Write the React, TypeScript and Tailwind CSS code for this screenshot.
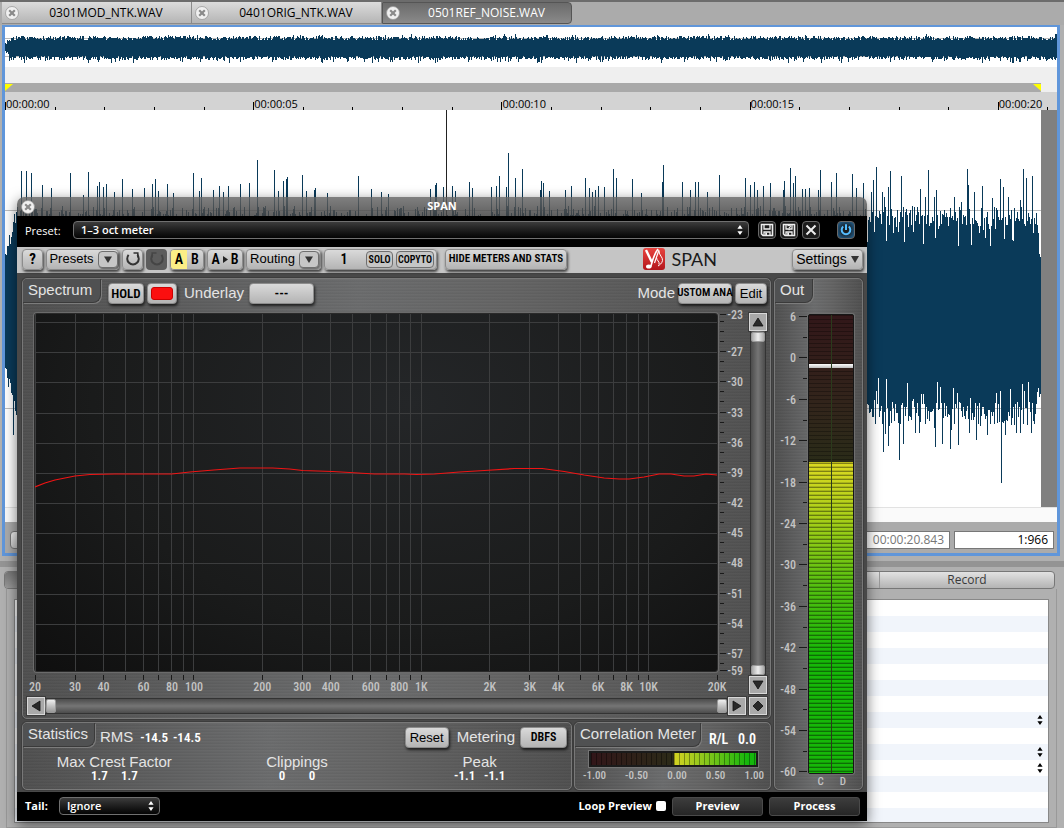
import type { ReactNode } from 'react'
import { clsx } from 'clsx'

const UI_FONT = "font-['Open_Sans','Noto_Sans',sans-serif]"
const LABEL_FONT = "font-['Liberation_Sans',sans-serif]"
const NARROW_FONT = "font-['Roboto_Condensed','Liberation_Sans_Narrow','Open_Sans_Condensed',sans-serif]"

const BRUSHED =
  'bg-[repeating-linear-gradient(to_bottom,rgba(255,255,255,0.02)_0px,rgba(255,255,255,0.02)_1px,rgba(0,0,0,0.03)_2px,rgba(0,0,0,0.03)_3px),linear-gradient(to_right,#505050,#6b6c6d_45%,#646464_65%,#505050)]'
const PLATE =
  'rounded-[4px] border border-[#8c8c8c] bg-linear-to-b from-[#dadada] to-[#b4b4b4] text-black shadow-[1px_2px_3px_rgba(0,0,0,0.7)]'

/* ---------- waveform data ---------- */

function makeRandom(seed: number) {
  let s = seed
  return () => {
    s = (s * 1664525 + 1013904223) % 4294967296
    return s / 4294967296
  }
}

// upward peaks, [x, y] in track pixels
const TOP_PEAKS: [number, number][] = [
  [21, 61], [26, 61], [31, 63], [42, 75], [51, 78], [70, 63], [83, 85], [88, 62], [97, 76], [99, 72],
  [103, 77], [106, 74], [114, 82], [122, 69], [132, 79], [144, 78], [152, 74], [155, 69], [158, 81], [167, 74],
  [173, 83], [193, 63], [199, 81], [201, 68], [213, 80], [219, 76], [223, 82], [228, 76], [240, 74], [249, 73],
  [257, 50], [274, 60], [278, 81], [283, 71], [286, 69], [287, 67], [302, 65], [306, 81], [314, 80], [315, 78],
  [327, 83], [358, 66], [371, 79], [381, 82], [388, 84], [430, 79], [435, 75], [436, 73], [443, 77], [452, 76],
  [455, 81], [469, 72], [472, 78], [491, 77], [496, 76], [499, 66], [506, 77], [508, 43], [515, 68], [522, 59],
  [540, 80], [541, 71], [543, 73], [549, 81], [565, 80], [571, 76], [585, 68], [589, 78], [592, 82], [595, 80],
  [598, 76], [604, 77], [613, 59], [616, 68], [632, 69], [641, 83], [662, 72], [663, 55], [682, 72], [690, 80],
  [695, 72], [698, 72], [707, 82], [719, 65], [745, 68], [750, 75], [754, 72], [757, 80], [763, 76], [770, 73],
  [783, 80], [784, 71], [790, 58], [793, 73], [795, 66], [802, 79], [805, 79], [809, 78], [818, 80], [820, 60],
  [831, 72], [836, 63], [852, 64], [856, 78], [863, 73], [871, 82], [873, 70], [876, 57], [882, 82], [884, 87],
  [888, 77], [890, 61], [901, 66], [920, 79], [925, 87], [928, 60], [934, 87], [936, 80], [954, 87], [961, 92],
  [967, 59], [968, 75], [974, 82], [982, 76], [992, 88], [1000, 69], [1003, 77], [1008, 87], [1020, 90],
  [1023, 59], [1026, 68], [1032, 66],
]

const BOTTOM_PEAKS: [number, number][] = [
  [13, 325], [883, 342], [885, 324], [888, 336], [899, 350], [903, 334], [915, 323], [919, 323], [935, 337],
  [942, 334], [950, 339], [958, 335], [969, 323], [976, 330], [987, 325], [1001, 373], [1005, 325], [1016, 323],
  [1020, 323], [1031, 323],
]

function trackPath() {
  const rnd = makeRandom(11)
  const top = new Map(TOP_PEAKS)
  const bottom = new Map(BOTTOM_PEAKS)
  let d = ''
  for (let x = 5; x < 1041; x++) {
    let a = 96 + rnd() * 20 + (rnd() < 0.2 ? rnd() * 26 : 0)
    let b = 292 + rnd() * 24 - (rnd() < 0.22 ? rnd() * 30 : 0) + (rnd() < 0.1 ? 6 : 0)
    if (x < 16) {
      a = 142 - (x - 5) * 4.5 + rnd() * 20
      b = 245 + (x - 5) * 5 + rnd() * 18
    }
    if (x > 1036) {
      a += (x - 1036) * 11
      b -= (x - 1036) * 9
    }
    a = top.get(x) ?? a
    b = bottom.get(x) ?? b
    d += `M${x - 5} ${Math.round(a)}h1V${Math.round(b)}h-1z`
  }
  return d
}

function overviewPath() {
  const rnd = makeRandom(5)
  let d = ''
  for (let x = 0; x < 1052; x++) {
    const ramp = Math.max(0, 6 - x)
    const a = 9 + rnd() * 4 - (rnd() < 0.08 ? 2 : 0) + ramp
    const b = 29 + rnd() * 4 + (rnd() < 0.08 ? 3 : 0) - ramp
    d += `M${x} ${Math.round(a)}h1V${Math.round(b)}h-1z`
  }
  return d
}

const TRACK = trackPath()
const OVERVIEW = overviewPath()

/* ---------- small parts ---------- */

function CloseDot({ label, className }: { label: string; className?: string }) {
  return (
    <button type="button" aria-label={label} className={clsx('shrink-0', className)}>
      <svg width="14" height="14" viewBox="0 0 14 14" className="block">
        <circle cx="7" cy="7" r="6.5" fill="#f0f0f0" stroke="#9a9a9a" strokeWidth="0.8" />
        <path d="M4.2 4.2l5.6 5.6M9.8 4.2l-5.6 5.6" stroke="#8a8a8a" strokeWidth="2.2" />
      </svg>
    </button>
  )
}

function UpDown({ className }: { className?: string }) {
  return (
    <svg width="6" height="10" viewBox="0 0 6 10" className={className} fill="currentColor">
      <path d="M3 0l2.6 3.8H.4zM3 10L.4 6.2h5.2z" />
    </svg>
  )
}

function Plate({ children, className, label }: { children: ReactNode; className?: string; label?: string }) {
  return (
    <button
      type="button"
      aria-label={label}
      className={clsx('flex h-[21px] shrink-0 items-center justify-center whitespace-nowrap', PLATE, className)}
    >
      {children}
    </button>
  )
}

function PanelTab({ children, className }: { children: ReactNode; className?: string }) {
  return (
    <h2
      className={clsx(
        'h-6 shrink-0 rounded-br-[8px] border-r border-b border-[#3a3a3a] bg-[#505152] text-[15px] leading-[22px] whitespace-nowrap text-[#e4e4e4] shadow-[1px_1px_0_#7c7c7c]',
        className,
      )}
    >
      {children}
    </h2>
  )
}

function Panel({ children, className }: { children: ReactNode; className?: string }) {
  return (
    <section
      className={clsx(
        'overflow-hidden rounded-[5px] border border-[#787878] shadow-[0_0_0_1px_#3d3d3d]',
        BRUSHED,
        className,
      )}
    >
      {children}
    </section>
  )
}

function ArrowKey({ path, label }: { path: string; label: string }) {
  return (
    <button
      type="button"
      aria-label={label}
      className="flex size-[18px] shrink-0 items-center justify-center border border-[#d8d8d8] bg-[#a9a9a9] shadow-[0_0_0_1px_#3c3c3c]"
    >
      <svg width="14" height="14" viewBox="0 0 14 14" fill="#2a2a2a" stroke="#111" strokeWidth="0.8">
        <path d={path} />
      </svg>
    </button>
  )
}

/* ---------- editor behind the plug-in ---------- */

const FILES = ['0301MOD_NTK.WAV', '0401ORIG_NTK.WAV', '0501REF_NOISE.WAV']

function FileTabs() {
  return (
    <nav className="flex h-[25px] border-t-2 border-[#6c6c6c] bg-[#ababab] pl-[2px]">
      {FILES.map((name, i) => (
        <div
          key={name}
          className={clsx(
            'flex h-[22px] w-[190px] items-center pl-[3px] text-[12px]',
            i === 2
              ? 'rounded-r-[4px] border border-[#555] bg-linear-to-b from-[#6b6b6b] to-[#8a8a8a] text-white'
              : 'border-r border-b border-[#8a8a8a] bg-linear-to-b from-[#dcdcdc] to-[#b5b5b5] text-black',
          )}
        >
          <CloseDot label={`Close ${name}`} />
          <a href="#" className="flex-1 pl-[2px] text-center">
            {name}
          </a>
        </div>
      ))}
    </nav>
  )
}

const SECONDS = Array.from({ length: 22 }, (_, i) => i)

function Ruler() {
  return (
    <div className="flex h-[18px] overflow-hidden bg-[#d3d3d3]">
      {SECONDS.map((s) => {
        const major = s % 5 === 0
        return (
          <div key={s} className="flex w-[4.72%] shrink-0 items-end">
            <span className={clsx('w-px shrink-0 bg-black', major ? 'h-2' : 'h-[3px]')} />
            {major && (
              <span className="w-0 text-[11px] leading-[12px] whitespace-nowrap text-black">
                00:00:{String(s).padStart(2, '0')}
              </span>
            )}
          </div>
        )
      })}
    </div>
  )
}

function Editor() {
  return (
    <div className="mr-[4px] ml-[2px] border-[3px] border-t-2 border-[#6096da] bg-white">
      <svg viewBox="0 0 1052 40" preserveAspectRatio="none" className="block h-10 w-full">
        <path d="M0 11.5h1052M0 29.5h1052" stroke="#b9b9b9" />
        <path d={OVERVIEW} fill="#0a3a59" shapeRendering="crispEdges" />
      </svg>
      <div className="h-4 bg-[#efefef]" />
      <div className="flex h-[9px] bg-[#efefef] pr-4">
        <div className="flex flex-1 justify-between bg-[#a9a9a9] pt-px">
          <svg width="8" height="7" fill="#ffff00">
            <path d="M0 0h8L0 7z" />
          </svg>
          <svg width="8" height="7" fill="#ffff00">
            <path d="M0 0h8v7z" />
          </svg>
        </div>
      </div>
      <Ruler />
      <div className="flex h-[397px]">
        <svg viewBox="0 0 1036 397" preserveAspectRatio="none" className="block h-full min-w-0 flex-1">
          <path d="M0 100.5h1036M0 298.5h1036" stroke="#bdbdbd" />
          <path d={TRACK} fill="#0a3a59" shapeRendering="crispEdges" />
          <path d="M441 0h1v200h-1z" fill="#222" shapeRendering="crispEdges" />
        </svg>
        <div className="w-4 bg-[#808080]" />
      </div>
      <div className="h-[15px] border-t border-[#e2e2e2] bg-[#fafafa]" />
      <div className="flex h-[31px] items-center gap-1 bg-[#ababab] pt-1 pr-[3px] pl-[5px] text-[12px]">
        <button
          type="button"
          aria-label="Zoom"
          className="mr-auto h-[18px] w-8 rounded-[4px] border border-[#777] bg-linear-to-b from-[#f2f2f2] to-[#c8c8c8]"
        />
        <input
          aria-label="Length"
          defaultValue="00:00:20.843"
          className="h-[18px] w-[100px] border border-[#777] bg-white pr-[5px] text-right text-[#777]"
        />
        <input
          aria-label="Zoom ratio"
          defaultValue="1:966"
          className="h-[18px] w-[100px] border border-[#777] bg-white pr-[5px] text-right text-black"
        />
      </div>
    </div>
  )
}

const ROWS = Array.from({ length: 14 }, (_, i) => i)
const STEPPER_ROWS = [7, 9, 10]

function RecordPane() {
  return (
    <div className="mt-1 flex-1 px-[4px]">
      <div className="mr-[5px] flex h-[18px] overflow-hidden rounded-[4px] border border-[#777] bg-linear-to-b from-[#e2e2e2] to-[#b4b4b4] text-[12px] text-[#3a3a3a]">
        <span className="flex-1 bg-linear-to-b from-[#777] to-[#999]" />
        <span className="flex-[4]" />
        <button type="button" className="flex w-[175px] items-center justify-center border-l border-[#999]">
          Record
        </button>
      </div>
      <div className="mr-[3px] ml-[2px] h-[239px] border-x border-b border-[#999] pt-[10px] pr-[7px] pl-[7px]">
        <div className="h-[224px] overflow-hidden border border-[#888] bg-white">
          <table className="w-full border-collapse">
            <tbody>
              {ROWS.map((r) => (
                <tr key={r} className={clsx('h-4', r % 2 === 1 ? 'bg-[#f1f5fb]' : 'bg-white')}>
                  <td className="h-4 p-0 leading-none">
                    {STEPPER_ROWS.includes(r) && (
                      <button type="button" aria-label="Step value" className="ml-auto flex h-4 w-[11px] items-center text-black">
                        <UpDown className="h-3 w-[6px]" />
                      </button>
                    )}
                  </td>
                </tr>
              ))}
            </tbody>
          </table>
        </div>
      </div>
    </div>
  )
}

/* ---------- plug-in header ---------- */

function DarkSelect({ id, value, className }: { id: string; value: string; className?: string }) {
  return (
    <div className={clsx('relative', className)}>
      <select
        id={id}
        className="block h-[18px] w-full appearance-none rounded-[4px] border border-[#707070] bg-linear-to-b from-[#3c3c3c] to-[#050505] pl-[7px] text-[11px] leading-[14px] font-semibold text-white"
      >
        <option>{value}</option>
      </select>
      <UpDown className="pointer-events-none absolute top-1 right-[6px] text-white" />
    </div>
  )
}

function HostButton({ label, children, className }: { label: string; children: ReactNode; className?: string }) {
  return (
    <button
      type="button"
      aria-label={label}
      className={clsx(
        'flex size-[18px] shrink-0 items-center justify-center rounded-[4px] border border-[#6a6a6a] bg-[#1c1c1c]',
        className,
      )}
    >
      {children}
    </button>
  )
}

function Floppy({ marked }: { marked?: boolean }) {
  return (
    <svg width="14" height="14" viewBox="0 0 14 14" fill="none" stroke="#eee" strokeWidth="1.6">
      <path d="M1.5 1.5h11v11H3L1.5 11z" />
      <path d="M4 1.5V6h6V1.5M4 12.5V9h6v3.5" strokeWidth="1.3" />
      <path d="M5.2 9.4H7v3H5.2z" fill="#eee" stroke="none" />
      {marked && <path d="M5.8 3.2c0-1.4 2.6-1.4 2.6.1 0 1-1.3.8-1.3 2M7.1 6v1.2" strokeWidth="1.2" />}
    </svg>
  )
}

function PresetBar() {
  return (
    <div className="flex h-[31px] items-center bg-black pr-3 pb-1 pl-2">
      <label htmlFor="preset" className="w-12 pt-1 text-[11px] font-medium text-white">
        Preset:
      </label>
      <DarkSelect id="preset" value="1–3 oct meter" className="flex-1" />
      <div className="ml-[9px] flex gap-1">
        <HostButton label="Save preset">
          <Floppy />
        </HostButton>
        <HostButton label="Save preset as">
          <Floppy marked />
        </HostButton>
        <HostButton label="Delete preset">
          <svg width="12" height="12" viewBox="0 0 12 12" stroke="#eee" strokeWidth="2">
            <path d="M1.5 1.5l9 9M10.5 1.5l-9 9" />
          </svg>
        </HostButton>
      </div>
      <HostButton label="Bypass" className="ml-[17px] shadow-[inset_0_0_6px_#1f7fc8]">
        <svg width="12" height="12" viewBox="0 0 12 12" fill="none" stroke="#55bdff" strokeWidth="2">
          <path d="M3.2 2.6a4.3 4.3 0 1 0 5.6 0M6 .3V6" />
        </svg>
      </HostButton>
    </div>
  )
}

function DropKey() {
  return (
    <span className="flex h-[17px] w-5 items-center justify-center rounded-[4px] border border-[#6f6f6f] bg-[#c6c6c6] shadow-[1px_1px_1px_rgba(0,0,0,0.4)]">
      <svg width="8" height="7" fill="#333">
        <path d="M0 .5h8L4 7z" />
      </svg>
    </span>
  )
}

function Toolbar() {
  return (
    <div className="flex h-[26px] items-center gap-[3px] bg-[#c5c5c5] pr-1 pb-[2px] pl-[5px]">
      <Plate className={clsx('w-[21px] text-[15px] font-bold', NARROW_FONT)}>?</Plate>
      <Plate className="w-[73px] gap-1 pl-[2px] text-[13px]">
        Presets
        <DropKey />
      </Plate>
      <Plate label="Undo" className="w-[21px]">
        <svg width="16" height="16" viewBox="0 0 16 16" fill="none" stroke="#333" strokeWidth="2">
          <path d="M3.6 3.8A5.8 5.8 0 1 0 12.4 3.8" />
          <path d="M8.5 2h5M12.8 1.5v5" strokeWidth="1.6" />
        </svg>
      </Plate>
      <button
        type="button"
        aria-label="Redo"
        className="flex h-[21px] w-[21px] shrink-0 items-center justify-center rounded-[4px] bg-[#5c5c5c]"
      >
        <svg width="16" height="16" viewBox="0 0 16 16" fill="none" stroke="#454545" strokeWidth="2">
          <path d="M12.4 3.8A5.8 5.8 0 1 1 3.6 3.8" />
          <path d="M7.5 2h-5M3.2 1.5v5" strokeWidth="1.6" />
        </svg>
      </button>
      <div className={clsx('flex h-[21px] w-[34px] shrink-0 overflow-hidden text-[14px] font-semibold', PLATE, NARROW_FONT)}>
        <button type="button" className="flex-1 bg-[#fbee86] leading-[19px]">
          A
        </button>
        <button type="button" className="flex-1 leading-[19px]">
          B
        </button>
      </div>
      <Plate label="Copy A to B" className={clsx('w-[36px] gap-[3px] text-[14px] font-semibold', NARROW_FONT)}>
        A
        <svg width="5" height="7" fill="#222">
          <path d="M0 0v7l5-3.5z" />
        </svg>
        B
      </Plate>
      <Plate className="w-[75px] gap-1 pl-[2px] text-[13px]">
        Routing
        <DropKey />
      </Plate>
      <div className={clsx('flex h-[21px] w-[113px] shrink-0 items-center gap-[3px] pr-[2px]', PLATE, NARROW_FONT)}>
        <button type="button" className="flex-1 text-[14px] font-semibold">
          1
        </button>
        <button
          type="button"
          className="h-[17px] w-[27px] rounded-[4px] border border-[#6f6f6f] bg-[#c6c6c6] text-[10px] leading-[15px] font-semibold"
        >
          SOLO
        </button>
        <button
          type="button"
          className="h-[17px] w-[38px] rounded-[4px] border border-[#6f6f6f] bg-[#c6c6c6] text-[10px] leading-[15px] font-semibold whitespace-nowrap"
        >
          COPYTO
        </button>
      </div>
      <Plate className={clsx('ml-[5px] w-[122px] text-[11px] font-semibold', NARROW_FONT)}>HIDE METERS AND STATS</Plate>
      <div className="mr-[72px] ml-auto flex items-center gap-[6px]">
        <svg width="22" height="22" viewBox="0 0 22 22">
          <defs>
            <linearGradient id="logo" x1="0" y1="0" x2="0" y2="1">
              <stop offset="0" stopColor="#e8443f" />
              <stop offset="1" stopColor="#b3151b" />
            </linearGradient>
          </defs>
          <rect width="22" height="22" rx="3" fill="url(#logo)" />
          <path d="M3 2l5.8 12" stroke="#fff" strokeWidth="2.4" fill="none" />
          <path d="M15 1C11 6 9.5 12 7.8 18.5" stroke="#fff" strokeWidth="1.6" fill="none" />
          <ellipse cx="5.8" cy="18.6" rx="2.8" ry="2" fill="#fff" />
          <path d="M16 2l-4.5 13" stroke="#fff" strokeWidth="1.2" fill="none" />
          <path
            d="M16 3c0 4.500 4 6 3.500 9.500-.5 3-3 4.500-4.500 5.500M13.500 9.500c0 3 3.500 4 2.500 7"
            stroke="#fff"
            strokeWidth="1"
            fill="none"
          />
        </svg>
        <span className="font-['Lato',sans-serif] text-[18px] leading-[22px] text-[#1a1a1a]">SPAN</span>
      </div>
      <Plate className="w-[71px] gap-[4px] text-[14px]">
        Settings
        <svg width="8" height="7" fill="#333">
          <path d="M0 0h8L4 7z" />
        </svg>
      </Plate>
    </div>
  )
}

/* ---------- spectrum ---------- */

const FREQS = [20, 30, 40, 50, 60, 70, 80, 90, 100, 200, 300, 400, 500, 600, 700, 800, 900, 1000, 2000, 3000, 4000, 5000, 6000, 7000, 8000, 9000, 10000, 20000]
const FREQ_LABELS = [20, 30, 40, 60, 80, 100, 200, 300, 400, 600, 800, 1000, 2000, 3000, 4000, 6000, 8000, 10000, 20000]
const DB_LINES = [-24, -27, -30, -33, -36, -39, -42, -45, -48, -51, -54, -57]
const DB_LABELS = [-23, ...DB_LINES.slice(1), -59]

const freqX = (f: number) => `${((Math.log10(f / 20) / 3) * 100).toFixed(2)}%`
const dbY = (db: number) => (db === -59 ? 357 : db === -23 ? 1 : Math.round((-24 - db) * 10.06 + 8))
const freqName = (f: number) => (f >= 1000 ? `${f / 1000}K` : String(f))

const CURVE =
  'M0 173L10 169L20 166L30 164L40 162L55 160.5L80 160H137L155 158L179 156L205 154H238L255 155L268 156.5L298 157.5L315 158.5L340 160H370L382 160.5L400 160L425 158L450 156.5L480 154.5H508L530 157.5L550 161L570 164L585 165H595L610 163L625 160L637 160L650 162L660 162L672 160L683 161'

function Graph() {
  return (
    <div className="rounded-[3px] border border-[#2a2a2a] bg-[radial-gradient(ellipse_at_55%_25%,#242628,#1a1b1b_60%,#0f0f0f)] shadow-[0_0_0_1px_#6b6b6b]">
      <svg className="block h-[357px] w-full" role="img" aria-label="Spectrum">
        {FREQS.map((f) => (
          <line key={f} x1={freqX(f)} x2={freqX(f)} y1="0" y2="357" stroke="#3c3d3e" shapeRendering="crispEdges" />
        ))}
        {DB_LINES.map((db) => (
          <line key={db} x1="0" x2="100%" y1={dbY(db)} y2={dbY(db)} stroke="#3c3d3e" shapeRendering="crispEdges" />
        ))}
        <svg width="100%" height="357" viewBox="0 0 683 357" preserveAspectRatio="none">
          <path d={CURVE} fill="none" stroke="#f01414" strokeWidth="1.2" vectorEffect="non-scaling-stroke" />
        </svg>
      </svg>
    </div>
  )
}

const DB_TICKS = Array.from({ length: 36 }, (_, i) => -23 - i)

function DbScale() {
  return (
    <svg width="26" height="359" className={clsx('block shrink-0 overflow-visible', NARROW_FONT)}>
      {DB_TICKS.map((db) => (
        <path key={db} d={`M2 ${dbY(db) + 0.5}h${DB_LABELS.includes(db) ? 6 : 4}`} stroke="#1a1a1a" />
      ))}
      <path d="M2 357.5h8" stroke="#1a1a1a" />
      {DB_LABELS.map((db) => (
        <text key={db} x="25" y={dbY(db) + 5} textAnchor="end" fontSize="12" fontWeight="500" fill="#c4c4c4">
          {db}
        </text>
      ))}
    </svg>
  )
}

function FreqScale() {
  return (
    <svg className={clsx('block h-[25px] w-full overflow-visible', NARROW_FONT)}>
      {FREQS.map((f) => (
        <line key={f} x1={freqX(f)} x2={freqX(f)} y1="3" y2="8" stroke="#1a1a1a" shapeRendering="crispEdges" />
      ))}
      {FREQ_LABELS.map((f) => (
        <text key={f} x={freqX(f)} y="19" textAnchor="middle" fontSize="12" fontWeight="500" fill="#c4c4c4">
          {freqName(f)}
        </text>
      ))}
    </svg>
  )
}

function SpectrumPanel() {
  return (
    <Panel>
      <div className="flex h-[34px] items-start">
        <PanelTab className="w-[78px] pl-[5px]">Spectrum</PanelTab>
        <div className="flex flex-1 items-center gap-[3px] pt-[3px] pr-[3px] pl-[7px]">
          <Plate className={clsx('w-[36px] text-[13px] font-semibold', NARROW_FONT)}>HOLD</Plate>
          <Plate label="Spectrum colour" className="w-[30px]">
            <span className="h-[13px] w-[22px] rounded-[3px] border border-[#c00] bg-[#fb0f0f]" />
          </Plate>
          <label htmlFor="underlay" className="mr-[2px] ml-1 text-[15px] text-[#e4e4e4]">
            Underlay
          </label>
          <button id="underlay" type="button" className={clsx('h-[21px] w-[65px] text-[13px] font-bold', PLATE, NARROW_FONT)}>
            ---
          </button>
          <span className="ml-auto text-[15px] text-[#e4e4e4]">Mode</span>
          <Plate label="Mode" className={clsx('w-[54px] text-[11px] font-semibold', NARROW_FONT)}>
            USTOM ANA
          </Plate>
          <Plate className="w-8 text-[13px]">Edit</Plate>
        </div>
      </div>
      <div className="flex pr-[3px] pl-[11px]">
        <div className="min-w-0 flex-1">
          <Graph />
          <div className="px-px">
            <FreqScale />
          </div>
        </div>
        <DbScale />
        <div className="ml-[5px] flex w-[18px] flex-col items-center pb-[3px]">
          <ArrowKey label="Range up" path="M7 3l5 8H2z" />
          <div className="flex w-[16px] flex-1 flex-col justify-between border-x border-[#333] bg-linear-to-r from-[#4c4c4c] via-[#757575] to-[#4c4c4c] py-px">
            <span className="h-[10px] rounded-[2px] border border-[#999] bg-linear-to-r from-[#aaa] via-[#eee] to-[#aaa]" />
            <span className="h-[10px] rounded-[2px] border border-[#999] bg-linear-to-r from-[#aaa] via-[#eee] to-[#aaa]" />
          </div>
          <ArrowKey label="Range down" path="M7 11L2 3h10z" />
        </div>
      </div>
      <div className="flex items-center pr-[3px] pb-[3px] pl-1">
        <ArrowKey label="Scroll left" path="M3 7l8-5v10z" />
        <div className="flex h-[16px] flex-1 justify-between border-y border-[#333] bg-linear-to-b from-[#4c4c4c] via-[#757575] to-[#4c4c4c] px-px">
          <span className="w-[10px] rounded-[2px] border border-[#999] bg-linear-to-b from-[#eee] to-[#999]" />
          <span className="w-[10px] rounded-[2px] border border-[#999] bg-linear-to-b from-[#eee] to-[#999]" />
        </div>
        <ArrowKey label="Scroll right" path="M11 7L3 2v10z" />
        <span className="w-[3px]" />
        <ArrowKey label="Reset view" path="M7 2l5 5-5 5-5-5z" />
      </div>
    </Panel>
  )
}

/* ---------- statistics, correlation, output ---------- */

const STATS = [
  { name: 'Max Crest Factor', values: ['1.7', '1.7'] },
  { name: 'Clippings', values: ['0', '0'] },
  { name: 'Peak', values: ['-1.1', '-1.1'] },
]

function StatisticsPanel() {
  const digits = clsx('font-semibold text-white', NARROW_FONT)
  return (
    <Panel className="h-[68px] flex-1">
      <div className="flex h-[32px] items-start">
        <PanelTab className="w-[72px] pl-[5px]">Statistics</PanelTab>
        <div className="flex flex-1 items-center gap-[5px] pt-[3px] pr-1 pl-[5px] text-[15px] text-[#e4e4e4]">
          <span>RMS</span>
          <div className={clsx('ml-[2px] flex gap-[5px] text-[13px]', digits)}>
            <span>-14.5</span>
            <span>-14.5</span>
          </div>
          <Plate className="ml-auto w-[44px] text-[13px]">Reset</Plate>
          <span className="ml-[3px]">Metering</span>
          <Plate className={clsx('w-[47px] text-[12px] font-semibold', NARROW_FONT)}>DBFS</Plate>
        </div>
      </div>
      <dl className="grid grid-cols-3 text-center text-[#e4e4e4]">
        {STATS.map((s) => (
          <div key={s.name}>
            <dt className="text-[15px] leading-[14px]">{s.name}</dt>
            <dd className={clsx('flex justify-center gap-4 text-[13px] leading-[14px]', digits)}>
              <span className="flex w-[14px] justify-center whitespace-nowrap">{s.values[0]}</span>
              <span className="flex w-[14px] justify-center whitespace-nowrap">{s.values[1]}</span>
            </dd>
          </div>
        ))}
      </dl>
    </Panel>
  )
}

function CorrelationPanel() {
  return (
    <Panel className="h-[68px] w-[197px] shrink-0">
      <div className="flex h-[28px] items-start">
        <PanelTab className="w-[126px] pl-[5px]">Correlation Meter</PanelTab>
        <div className={clsx('flex flex-1 justify-between pt-[6px] pr-[14px] pl-2 text-[14px] leading-5 font-semibold text-white', NARROW_FONT)}>
          <span>R/L</span>
          <span>0.0</span>
        </div>
      </div>
      <div className="mr-[12px] ml-[14px] flex h-[16px] border-2 border-[#1b1b1b] shadow-[0_0_0_1px_#757575]">
        <div className="flex-1 bg-[repeating-linear-gradient(to_right,rgba(0,0,0,0.4)_0px,rgba(0,0,0,0.4)_1px,transparent_1px,transparent_5px),linear-gradient(to_right,#321619,#2c2b18)]" />
        <div className="w-1/2 bg-[repeating-linear-gradient(to_right,rgba(0,0,0,0.35)_0px,rgba(0,0,0,0.35)_1px,transparent_1px,transparent_5px),linear-gradient(to_right,#d5d222,#8fc81c_35%,#14b60c_90%)]" />
      </div>
      <div className={clsx('flex justify-between pt-px pr-[6px] pl-2 text-[11px] leading-4 font-medium text-[#c4c4c4]', NARROW_FONT)}>
        {['-1.00', '-0.50', '0.00', '0.50', '1.00'].map((v) => (
          <span key={v}>{v}</span>
        ))}
      </div>
    </Panel>
  )
}

const OUT_LABELS = [6, 0, -6, -12, -18, -24, -30, -36, -42, -48, -54, -60]
const outY = (db: number) => Math.round((6 - db) * 6.9 + 2)

function MeterBar({ lit }: { lit: number }) {
  return (
    <div className="flex flex-1 flex-col bg-[repeating-linear-gradient(to_bottom,rgba(0,0,0,0.3)_0px,rgba(0,0,0,0.3)_1px,transparent_1px,transparent_4px),linear-gradient(to_bottom,#321719,#32251b_20%,#2a2b18_32%)]">
      <span className="mt-[49px] h-1 bg-linear-to-b from-white to-[#bdbdbd]" />
      <div
        className="mt-auto bg-[repeating-linear-gradient(to_bottom,rgba(0,0,0,0.15)_0px,rgba(0,0,0,0.15)_1px,rgba(0,0,0,0.4)_1px,rgba(0,0,0,0.4)_2px,transparent_2px,transparent_4px),linear-gradient(to_bottom,#dcd822,#a8cf18_18%,#54bf10_40%,#16b808_62%)]"
        style={{ height: `${lit}%` }}
      />
    </div>
  )
}

function OutPanel() {
  return (
    <Panel className="w-[89px] shrink-0">
      <PanelTab className="w-[38px] pl-[5px]">Out</PanelTab>
      <div className="flex pt-[11px]">
        <svg width="33" height="460" className={clsx('block shrink-0 overflow-visible', NARROW_FONT)}>
          {OUT_LABELS.map((db) => (
            <g key={db}>
              <path d={`M24 ${outY(db) + 0.5}h8`} stroke="#1a1a1a" />
              {db > -60 && <path d={`M28 ${outY(db - 3) + 0.5}h4`} stroke="#1a1a1a" />}
              <text x="21" y={outY(db) + 5} textAnchor="end" fontSize="12" fontWeight="500" fill="#c4c4c4">
                {db}
              </text>
            </g>
          ))}
        </svg>
        <div className="flex h-[460px] w-[46px] gap-px rounded-[2px] border border-[#161616] bg-[#2b3a1c] shadow-[0_0_0_1px_#6e6e6e]">
          <MeterBar lit={68} />
          <MeterBar lit={68} />
        </div>
      </div>
      <div className={clsx('flex w-[79px] justify-end gap-[16px] pt-px pr-[8px] text-[11px] leading-[13px] font-medium text-[#c4c4c4]', NARROW_FONT)}>
        <span>C</span>
        <span>D</span>
      </div>
    </Panel>
  )
}

function SpanWindow() {
  return (
    <div className="absolute top-[197px] right-[197px] left-[17px] rounded-t-[7px] shadow-[0_4px_14px_rgba(0,0,0,0.55)]">
      <div className="flex h-[19px] items-center rounded-t-[7px] bg-linear-to-b from-[rgba(100,100,100,0.82)] to-[rgba(66,66,66,0.84)] pl-1">
        <CloseDot label="Close SPAN" />
        <h1 className="flex-1 pr-[18px] text-center text-[11px] font-bold text-white">SPAN</h1>
      </div>
      <PresetBar />
      <div className={LABEL_FONT}>
        <Toolbar />
        <div className="flex gap-[3px] bg-[#484848] pt-[5px] pr-1 pb-[2px] pl-[5px]">
          <div className="flex min-w-0 flex-1 flex-col gap-[3px]">
            <SpectrumPanel />
            <div className="flex gap-[2px]">
              <StatisticsPanel />
              <CorrelationPanel />
            </div>
          </div>
          <OutPanel />
        </div>
      </div>
      <div className="flex h-[29px] items-center bg-black pr-[7px] pb-px pl-2 text-[11px] font-bold text-white">
        <label htmlFor="tail" className="w-[34px]">
          Tail:
        </label>
        <DarkSelect id="tail" value="Ignore" className="w-[101px]" />
        <label htmlFor="loop" className="mr-1 ml-auto">
          Loop Preview
        </label>
        <input id="loop" type="checkbox" className="mr-[6px] size-[10px] appearance-none rounded-[2px] bg-white" />
        <button type="button" className="mr-[6px] h-[19px] w-[91px] rounded-[3px] border border-[#4a4a4a] bg-linear-to-b from-[#3d3d3d] to-[#262626]">
          Preview
        </button>
        <button type="button" className="h-[19px] w-[91px] rounded-[3px] border border-[#4a4a4a] bg-linear-to-b from-[#3d3d3d] to-[#262626]">
          Process
        </button>
      </div>
    </div>
  )
}

export default function App() {
  return (
    <main className={clsx('relative flex min-h-screen flex-col overflow-hidden bg-[#b0b0b0]', UI_FONT)}>
      <FileTabs />
      <Editor />
      <div className="mt-[5px] h-[6px] bg-[#949494]" />
      <RecordPane />
      <SpanWindow />
    </main>
  )
}
